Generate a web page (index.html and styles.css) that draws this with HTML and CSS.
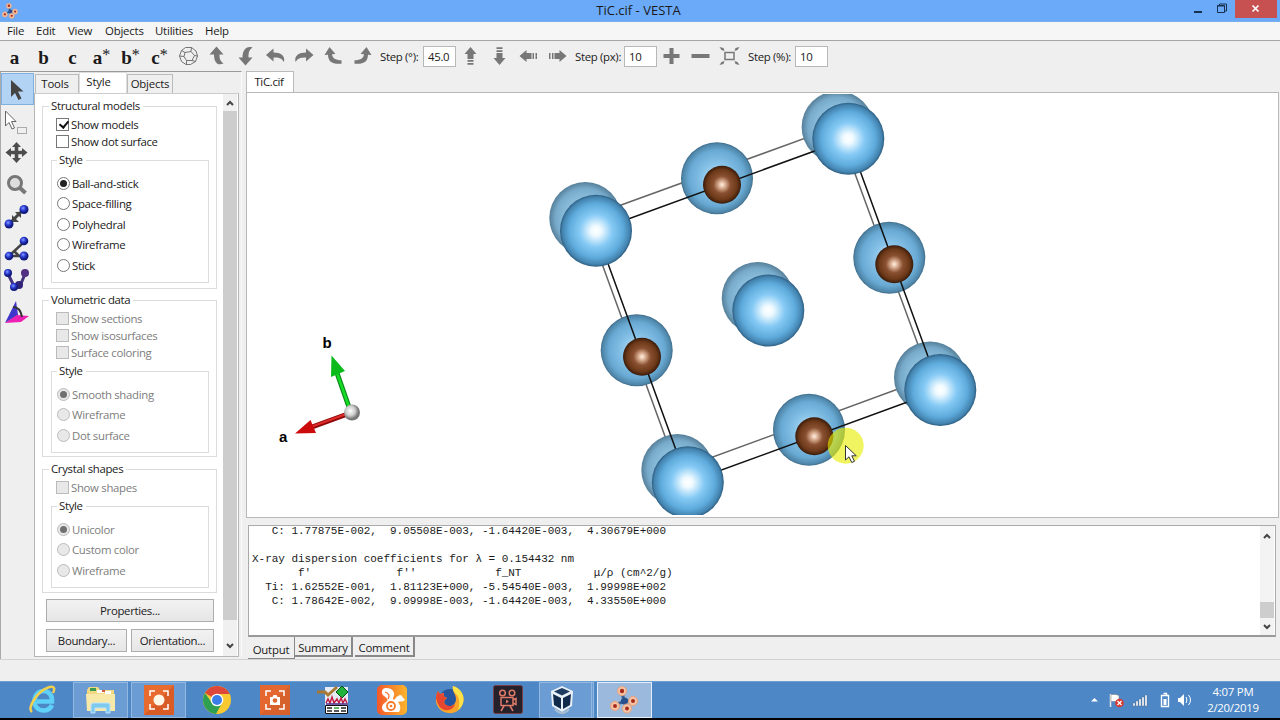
FILE: index.html
```
<!DOCTYPE html>
<html lang="en">
<head>
  <meta charset="UTF-8">
  <title>TiC.cif - VESTA</title>
  <link rel="stylesheet" href="styles.css">
</head>
<body>
  <svg width="0" height="0" class="defs">
    <defs>
      <radialGradient id="ti"><stop offset="0" stop-color="#fff"/><stop offset=".14" stop-color="#effaff"/><stop offset=".45" stop-color="#86caf5"/><stop offset=".75" stop-color="#5eabdc"/><stop offset=".93" stop-color="#4484b0"/><stop offset="1" stop-color="#2d5d80"/></radialGradient>
      <radialGradient id="tiMid"><stop offset="0" stop-color="#d8efff"/><stop offset=".4" stop-color="#88c3e9"/><stop offset=".78" stop-color="#68a9d3"/><stop offset=".95" stop-color="#4f86a9"/><stop offset="1" stop-color="#3e6b88"/></radialGradient>
      <radialGradient id="tiBack"><stop offset="0" stop-color="#c5e2f3"/><stop offset=".5" stop-color="#8fc0de"/><stop offset=".82" stop-color="#78abcb"/><stop offset="1" stop-color="#567f99"/></radialGradient>
      <radialGradient id="carbon"><stop offset="0" stop-color="#fff0e4"/><stop offset=".18" stop-color="#dcb196"/><stop offset=".45" stop-color="#8a5132"/><stop offset=".8" stop-color="#6b3818"/><stop offset="1" stop-color="#391b0a"/></radialGradient>
      <radialGradient id="blueBall" cx=".4" cy=".35"><stop offset="0" stop-color="#8c9cff"/><stop offset=".5" stop-color="#2f42d8"/><stop offset="1" stop-color="#101a80"/></radialGradient>
      <radialGradient id="origin" cx=".4" cy=".4"><stop offset="0" stop-color="#fff"/><stop offset=".6" stop-color="#ccc"/><stop offset="1" stop-color="#777"/></radialGradient>
      <linearGradient id="ucg"><stop offset="0" stop-color="#f4582a"/><stop offset="1" stop-color="#fbb52c"/></linearGradient>
      <symbol id="vesta" viewBox="0 0 28 28">
        <path d="M12 6l2 9-8 4M14 15l10-1M14 15l3 7" stroke="#3a5f92" stroke-width="3" fill="none"/>
        <circle cx="14.500" cy="15" r="3.500" fill="#27508c"/>
        <g fill="#f6c4a4" stroke="#e9a27c"><circle cx="12" cy="5" r="4.500"/><circle cx="5" cy="20" r="4.500"/><circle cx="23" cy="15" r="4.500"/><circle cx="17" cy="22.500" r="4.500"/></g>
        <g fill="#a52d1e"><circle cx="12" cy="5" r="2.200"/><circle cx="5" cy="20" r="2"/><circle cx="23" cy="15" r="2"/><circle cx="17" cy="22.500" r="2"/></g>
      </symbol>
    </defs>
  </svg>

  <header class="titlebar">
    <svg class="app-icon" width="16" height="16"><use href="#vesta"/></svg>
    <div class="title">TiC.cif - VESTA</div>
    <div class="win-buttons">
      <svg width="25" height="21"><path d="M9 12h8" stroke="#17304f" stroke-width="2"/></svg>
      <svg width="25" height="21"><path d="M7.500 5.500h7v7h-7zM9.500 5V4h7v7h-2" stroke="#17304f" fill="none"/><path d="M7 6h8" stroke="#17304f"/></svg>
      <div class="close"><svg width="10" height="10"><path d="M1.500 1.500l6 6M7.500 1.500l-6 6" stroke="#fff" stroke-width="1.700"/></svg></div>
    </div>
  </header>

  <nav class="menubar">
    <span class="m-file">File</span><span class="m-edit">Edit</span><span class="m-view">View</span><span class="m-objects">Objects</span><span class="m-util">Utilities</span><span>Help</span>
  </nav>

  <div class="toolbar">
    <b>a</b><b>b</b><b>c</b><b>a<sup>*</sup></b><b>b<sup>*</sup></b><b>c<sup>*</sup></b>
    <svg class="tool" viewBox="0 0 20 20"><path d="M7 1.500h6l4.500 3.500 1.500 5-2 5.500-5 3H7.500L3 15.500 1 10l2-5.500zM6.500 6.500l6-1 3.500 4-2.500 5H8l-2.500-4zM6.500 6.500L3 4.500M12.500 5.500L13 1.500M16 9.500l3 .5M13.500 14.500l3.500 1M8 14.500v4M5.500 10.500L1 10" fill="none" stroke="#666" stroke-width=".9"/></svg>
    <svg class="tool" viewBox="0 0 20 20"><path d="M9 .5L16 8.500h-4c0 4 .5 6.500 4 9-6 2.500-9.500-1-9.500-9H2z"/></svg>
    <svg class="tool" viewBox="0 0 20 20"><path d="M9 19.500L2 11.500h4C6 4.500 9.500-.5 16 1.500 12.500 4 12 6.500 12 11.500h4z"/></svg>
    <svg class="tool" viewBox="0 0 20 20"><path d="M.5 9L8 2.500v4c7 0 12 3 10.500 9.500C16 12 13 11.500 8 11.500v4z"/></svg>
    <svg class="tool" viewBox="0 0 20 20"><path d="M19 9l-7.500-6.500v4c-7 0-12 3-10.500 9.500C3.500 12 6.500 11.500 11.500 11.500v4z"/></svg>
    <svg class="tool" viewBox="0 0 20 20"><path d="M6 1l6 7-3.500.2c.5 3.800 3 6 9.500 6v3.500C9 18.500 4.700 16 4.500 8.800L1 9z"/></svg>
    <svg class="tool" viewBox="0 0 20 20"><path d="M14 1L8 8l3.500.2c-.5 3.800-3 6-9.500 6v3.500C11 18.500 15.300 16 15.500 8.800L19 9z"/></svg>
    <label class="step-deg">Step (°):</label><input value="45.0">
    <svg class="tool" viewBox="0 0 20 20"><path d="M10 1l6 7h-3v5H7V8H4zM7 14h6v1.700H7zM7 17h6v1.700H7z"/></svg>
    <svg class="tool" viewBox="0 0 20 20"><path d="M10 19l6-7h-3V7H7v5H4zM7 4.300h6V6H7zM7 1.300h6V3H7z"/></svg>
    <svg class="tool" viewBox="0 0 20 20"><path d="M1 10l7-6v3h5v6H8v3zM14 7h1.500v6H14zM17 7h1.500v6H17z"/></svg>
    <svg class="tool" viewBox="0 0 20 20"><path d="M19 10l-7-6v3H7v6h5v3zM4.500 7H6v6H4.500zM1.500 7H3v6H1.500z"/></svg>
    <label class="step-px">Step (px):</label><input value="10">
    <svg class="tool" viewBox="0 0 20 20"><path d="M8 2h4v6h6v4h-6v6H8v-6H2V8h6z"/></svg>
    <svg class="tool" viewBox="0 0 20 20"><path d="M1 8h18v4H1z"/></svg>
    <svg class="tool" viewBox="0 0 20 20"><path d="M5.500 6.500h9v7h-9z" fill="none" stroke="#777" stroke-width="1.500"/><path d="M0 1l4 1 1 3-3-1zM20 1l-4 1-1 3 3-1zM0 19l4-1 1-3-3 1zM20 19l-4-1-1-3 3 1z"/></svg>
    <label class="step-pct">Step (%):</label><input value="10">
  </div>

  <main>
    <aside class="toolstrip">
      <div class="active"><svg width="32" height="32"><path d="M11 8v17l4-4 3.500 7 3-1.500L18 19.500h5.500z" fill="#444"/></svg></div>
      <div><svg width="32" height="32"><path d="M4.500 6v15l3.500-3.500 3 6.500 2.500-1-3-6.500h4.500z" fill="#fff" stroke="#666"/><path d="M16.500 22.500h9v6h-9z" fill="none" stroke="#666" stroke-dasharray="1 1"/></svg></div>
      <div><svg width="32" height="32"><path d="M15.500 5l4.500 5h-2.700v3.700h3.700v-2.700l5.500 4.500-5.500 4.500v-2.700h-3.700V21H20l-4.500 5-4.500-5h2.700v-3.700H10V20l-5.500-4.500L10 11v2.700h3.700V10H11z" fill="#4d4d4d"/></svg></div>
      <div><svg width="32" height="32"><circle cx="14" cy="14" r="6.500" fill="#ddd" stroke="#777" stroke-width="3"/><path d="M19 19l5.500 5" stroke="#777" stroke-width="4"/></svg></div>
      <div><svg width="32" height="32"><path d="M8 23L23 8" stroke="#444" stroke-width="3"/><path d="M11 14v7h7zM14 11h6v6z" fill="#444"/><circle cx="23" cy="8.500" r="4.500" fill="url(#blueBall)"/><circle cx="8" cy="23" r="4.500" fill="url(#blueBall)"/></svg></div>
      <div><svg width="32" height="32"><path d="M23 9L8 23h15M13 18l5 5" fill="none" stroke="#444" stroke-width="2.500"/><circle cx="23" cy="8" r="4.300" fill="url(#blueBall)"/><circle cx="8" cy="23" r="4.300" fill="url(#blueBall)"/><circle cx="23" cy="23" r="4.500" fill="url(#blueBall)"/></svg></div>
      <div><svg width="32" height="32"><path d="M7 9l6 12h6l5-12" fill="none" stroke="#44337c" stroke-width="3"/><circle cx="7" cy="8" r="4" fill="url(#blueBall)"/><circle cx="24" cy="8" r="4" fill="#523082"/><circle cx="18" cy="20" r="4" fill="#302377"/><circle cx="13" cy="22" r="4" fill="url(#blueBall)"/></svg></div>
      <div><svg width="32" height="32"><path d="M4 26L15 4l2 14z" fill="#4036cc"/><path d="M4 26l12-8 12 1-8 6z" fill="#ee20b4"/><path d="M12 10c6 0 8 4 9 10" fill="none" stroke="#333" stroke-width="2"/></svg></div>
    </aside>

    <section class="side">
      <div class="side-tabs"><span class="t-tools">Tools</span><span class="t-style on">Style</span><span class="t-objects">Objects</span></div>
      <div class="side-page">
        <div class="options">
          <fieldset class="group structural">
            <legend>Structural models</legend>
            <label class="check"><i class="on"></i>Show models</label>
            <label class="check"><i></i>Show dot surface</label>
            <fieldset class="inner">
              <legend>Style</legend>
              <label class="radio"><i class="on"></i>Ball-and-stick</label>
              <label class="radio"><i></i>Space-filling</label>
              <label class="radio"><i></i>Polyhedral</label>
              <label class="radio"><i></i>Wireframe</label>
              <label class="radio"><i></i>Stick</label>
            </fieldset>
          </fieldset>
          <fieldset class="group volumetric">
            <legend>Volumetric data</legend>
            <label class="check off"><i></i>Show sections</label>
            <label class="check off"><i></i>Show isosurfaces</label>
            <label class="check off"><i></i>Surface coloring</label>
            <fieldset class="inner">
              <legend>Style</legend>
              <label class="radio off"><i class="on"></i>Smooth shading</label>
              <label class="radio off"><i></i>Wireframe</label>
              <label class="radio off"><i></i>Dot surface</label>
            </fieldset>
          </fieldset>
          <fieldset class="group crystal">
            <legend>Crystal shapes</legend>
            <label class="check off"><i></i>Show shapes</label>
            <fieldset class="inner">
              <legend>Style</legend>
              <label class="radio off"><i class="on"></i>Unicolor</label>
              <label class="radio off"><i></i>Custom color</label>
              <label class="radio off"><i></i>Wireframe</label>
            </fieldset>
          </fieldset>
          <div class="side-buttons">
            <button class="wide">Properties...</button>
            <button>Boundary...</button>
            <button>Orientation...</button>
          </div>
        </div>
        <div class="scrollbar">
          <svg width="14" height="14"><path d="M4 9l3-3 3 3" fill="none" stroke="#444" stroke-width="2"/></svg>
          <div class="thumb"></div>
          <svg width="14" height="14"><path d="M4 5l3 3 3-3" fill="none" stroke="#444" stroke-width="2"/></svg>
        </div>
      </div>
    </section>

    <section class="work">
      <div class="doc-tabs"><span>TiC.cif</span></div>
      <div class="canvas">
        <svg class="scene" width="1030" height="424" viewBox="247 93 1030 424">
          <clipPath id="view"><rect x="247" y="94" width="1031" height="421"/></clipPath>
          <g clip-path="url(#view)">
            <path d="M585.300 218L837.600 126.400 930 377.300 677.300 470z" fill="none" stroke="#666" stroke-width="1.500"/>
            <g fill="url(#tiBack)"><circle cx="585.300" cy="218" r="36"/><circle cx="837.600" cy="127" r="36"/><circle cx="757.700" cy="298" r="36"/><circle cx="930" cy="377.500" r="36"/><circle cx="677.300" cy="470" r="36"/></g>
            <g fill="url(#tiMid)"><circle cx="717" cy="178.300" r="36"/><circle cx="889.300" cy="257.800" r="36"/><circle cx="636.700" cy="350.300" r="36"/><circle cx="809" cy="429.800" r="36"/></g>
            <path d="M596 230.700L848.300 138.700 940.300 390 687.800 482.300z" fill="none" stroke="#111" stroke-width="1.500"/>
            <g fill="url(#carbon)"><circle cx="722" cy="184.700" r="19"/><circle cx="894.300" cy="264.200" r="19"/><circle cx="642" cy="356.700" r="19"/><circle cx="814.300" cy="436.300" r="19"/></g>
            <g fill="url(#ti)"><circle cx="596" cy="230.700" r="36"/><circle cx="848.300" cy="138.700" r="36"/><circle cx="768.300" cy="310.500" r="36"/><circle cx="940.300" cy="390" r="36"/><circle cx="687.800" cy="482.300" r="36"/></g>
          </g>
          <path d="M350 410L337 373" stroke="#0a8d18" stroke-width="5"/><path d="M350 410L337 373" stroke="#16dc26" stroke-width="2.500"/>
          <path d="M331.500 355.500l13.500 15.500-14 6z" fill="#0cba1c"/>
          <path d="M349 413.500L312 427" stroke="#8e0909" stroke-width="5"/><path d="M349 413L312 426.500" stroke="#e02b2b" stroke-width="2"/>
          <path d="M295 433.500l15.500-13.500 5.500 13z" fill="#cc0c0c"/>
          <circle cx="352" cy="412.500" r="8" fill="url(#origin)"/>
          <text x="322.500" y="348">b</text>
          <text x="279" y="442">a</text>
          <circle cx="845.700" cy="445.700" r="18" fill="#e8ee00" opacity=".62"/>
          <path d="M845.500 445.500v14.500l3.500-3.200 2.800 5.700 2.700-1.200-2.700-5.500h4.500z" fill="#fff" stroke="#333"/>
        </svg>
      </div>
      <div class="output">
<pre>   C: 1.77875E-002,  9.05508E-003, -1.64420E-003,  4.30679E+000

X-ray dispersion coefficients for λ = 0.154432 nm
       f'             f''            f_NT           μ/ρ (cm^2/g)
  Ti: 1.62552E-001,  1.81123E+000, -5.54540E-003,  1.99998E+002
   C: 1.78642E-002,  9.09998E-003, -1.64420E-003,  4.33550E+000</pre>
        <div class="scrollbar">
          <svg width="14" height="14"><path d="M4 9l3-3 3 3" fill="none" stroke="#444" stroke-width="2"/></svg>
          <div class="thumb"></div>
          <svg width="14" height="14"><path d="M4 5l3 3 3-3" fill="none" stroke="#444" stroke-width="2"/></svg>
        </div>
      </div>
      <div class="out-tabs"><span class="o-output on">Output</span><span class="o-summary">Summary</span><span class="o-comment">Comment</span></div>
    </section>
  </main>

  <div class="statusbar"></div>

  <footer class="taskbar">
    <div class="apps">
      <!-- Internet Explorer -->
      <div class="app"><svg width="30" height="30"><path d="M24 20c-1.500 3.500-4.500 5.500-8.500 5.500-5.500 0-9-4-9-9.500S10 6 15.500 6s9 4.500 8.500 10.500H9" fill="none" stroke="#5fd0f7" stroke-width="4.500"/><path d="M4 27C-1 23 9 7 19 3c6-2.500 9-1 6 5" fill="none" stroke="#f1d04e" stroke-width="2.500"/></svg></div>
      <!-- Explorer -->
      <div class="app open"><svg width="32" height="30"><path d="M2 5l2-3h9l2 3h14v21H2z" fill="#f2d981"/><path d="M5 3h6v3H5z" fill="#3d9b52"/><path d="M12 5h7v3h-7zM20 6h6v3h-6z" fill="#fff"/><path d="M17 5h3v2h-3z" fill="#d55c3e"/><path d="M1 9h29v17H2z" fill="#f8e9a9"/><path d="M6 28V20q0-2 2-2h15q2 0 2 2v8h-4v-5H10v5z" fill="#7fc9ee" stroke="#bce5f8"/></svg></div>
      <!-- recorder -->
      <div class="app open"><svg width="30" height="30"><path d="M0 0h30v30H0z" fill="#e76b2f"/><path d="M0 30L30 0v30z" fill="#d95c27"/><path d="M6 11V6h5M19 6h5v5M24 19v5h-5M11 24H6v-5" fill="none" stroke="#fff" stroke-width="1.500"/><circle cx="15" cy="15" r="5.500" fill="#fff8e9"/></svg></div>
      <!-- Chrome -->
      <div class="app"><svg width="30" height="30"><circle cx="15" cy="15" r="14" fill="#f8c930"/><path d="M15 15L2.900 8A14 14 0 0 1 27.700 9H15z" fill="#dc473a"/><path d="M2.900 8A14 14 0 0 0 14 29l6-11-10 0z" fill="#2fa052"/><circle cx="15" cy="15" r="6.300" fill="#fff"/><circle cx="15" cy="15" r="5" fill="#3c7ee8"/></svg></div>
      <!-- screenshot tool -->
      <div class="app"><svg width="30" height="30"><path d="M0 0h30v30H0z" fill="#e3672e"/><path d="M0 30L30 0v30z" fill="#d6612c"/><path d="M6 11V6h5M19 6h5v5M24 19v5h-5M11 24H6v-5" fill="none" stroke="#fff" stroke-width="1.500"/><path d="M10 12h2.500l1-2h3l1 2H20v8H10z" fill="#fff"/><circle cx="15" cy="15.500" r="2.300" fill="#df672f"/></svg></div>
      <!-- diffraction viewer -->
      <div class="app"><svg width="32" height="30"><path d="M8 2h23v27H8z" fill="#e6eaf2"/><path d="M0 7h8l3 3 9-8" fill="none" stroke="#a97833" stroke-width="3"/><path d="M25 1l6 6-6 6-6-6z" fill="#21b33b" stroke="#064f13"/><path d="M9 18l2-4 2 4 2-6 2 6 3-4 2 4 2-5 2 5 2-4 2 4" fill="none" stroke="#c31e45" stroke-width="1.500"/><path d="M9 19h22" stroke="#4b2c8b" stroke-width="1.500"/><path d="M8.500 20.500h22v8h-22z" fill="#fff" stroke="#111"/><path d="M10 23h5M10 26h5M17 26h5M24 23h5M24 26h5" stroke="#222" stroke-width="1.500"/><path d="M17 23h5" stroke="#2ba136" stroke-width="1.500"/></svg></div>
      <!-- UC browser -->
      <div class="app"><svg width="30" height="30"><rect width="30" height="30" rx="5" fill="url(#ucg)"/><path d="M8 27c-5-3-3-8 1-10 3-2 1-4-2-6-4-3-2-8 2-8 7 0 10 5 7 10 0 2 1 2 2 1 2-3 4-4 6-4l4 5c-2 2-5 1-7 2 3 4 3 7 1 10z" fill="#fff"/><circle cx="14" cy="21" r="4" fill="none" stroke="#f37a2a" stroke-width="1.800"/><circle cx="14" cy="21" r="1.300" fill="#f37a2a"/><path d="M8 7c4 1 5 4 3 7" fill="none" stroke="#f4692a" stroke-width="1.200"/></svg></div>
      <!-- Firefox -->
      <div class="app"><svg width="30" height="30"><circle cx="15" cy="15" r="11" fill="#27569f"/><path d="M18 1c9 3 12 11 10 17-2 7-8 11-15 10C5 27 0 20 1 13c0-3 1-5 2-7l2 3 4-1c-1 3 0 4 3 5-3 2-4 5-1 7 4 3 10 0 10-6 0-5-4-7-3-13z" fill="#fba52a"/><path d="M1 13c0-3 1-5 2-7l2 3 4-1c-1 3 0 4 3 5-3 2-4 5-1 7 3 2 7 1 9-1-1 5-7 8-13 5-3-2-5-6-6-11z" fill="#e8472f"/><path d="M18 1c9 3 12 11 10 17-1 3-3 6-5 7 2-6 2-12-2-16-2-2-4-5-3-8z" fill="#fde347"/></svg></div>
      <!-- movie maker -->
      <div class="app"><svg width="30" height="30"><rect x=".5" y=".5" width="29" height="28" rx="2" fill="#252029" stroke="#793f44"/><g fill="none" stroke="#dd7a68" stroke-width="1.500"><circle cx="9.500" cy="8" r="2.800"/><circle cx="19" cy="8" r="2.800"/><path d="M8 12.500h12v8H8zM20 15l3-1.500v6L20 18M11 21l-3 5M17 21l3 5"/></g><path d="M13 14.500v4l3-2z" fill="#dd7a68"/></svg></div>
      <!-- VirtualBox -->
      <div class="app open stacked"><svg width="28" height="30"><path d="M14 1l11 5-1 15-10 6-10-6L3 6z" fill="#e9f1f8"/><path d="M14 3l8 3.500-8 4-8-4z" fill="#1d3b60"/><path d="M5 9l8 4v11l-7-4zM23 9l-8 4v11l7-4z" fill="#112b4c"/><path d="M7 24q7 8 14 0" fill="none" stroke="#a8bdd2" stroke-width="2"/></svg></div>
      <!-- VESTA -->
      <div class="app current"><svg width="28" height="28"><use href="#vesta"/></svg></div>
    </div>
    <div class="tray">
      <svg width="100" height="18">
        <path d="M0 10.500L3.500 7 7 10.500z" fill="#fff"/>
        <path d="M19.500 3v13" stroke="#e8e8e8" stroke-width="1.500"/><path d="M20 3.500h5l3 1v6h-8z" fill="#fff" stroke="#777" stroke-width=".5"/><circle cx="28.500" cy="12" r="4.300" fill="#d83a34"/><path d="M26.500 10l4 4M30.500 10l-4 4" stroke="#fff" stroke-width="1.300"/>
        <path d="M42 12h2v3h-2zM45 10h2v5h-2zM48 8h2v7h-2zM51 6h2v9h-2zM54 4h2v11h-2z" fill="#fff" stroke="#4a6485" stroke-width=".4"/>
        <path d="M70.500 4.500h7v11h-7zM72.500 2.500h3v2" fill="none" stroke="#fff" stroke-width="1.400"/><path d="M72.500 8h3v6h-3z" fill="#fff"/>
        <path d="M87 7h2l4-4v12l-4-4h-2z" fill="#fff"/><path d="M95 6q2 3 0 6M97.500 4q4 5 0 10" fill="none" stroke="#fff"/>
      </svg>
      <div class="clock"><span>4:07 PM</span><span>2/20/2019</span></div>
    </div>
  </footer>
</body>
</html>
```
FILE: styles.css
```
* {
  box-sizing: border-box;
}

body {
  margin: 0;
  width: 1280px;
  height: 720px;
  overflow: hidden;
  display: flex;
  flex-direction: column;
  background: #efefef;
  color: #1a1a1a;
  font-family: "Open Sans", "Noto Sans", sans-serif;
  font-size: 11.4px;
  letter-spacing: -0.32px;
  white-space: nowrap;
}

svg {
  display: block;
  flex: none;
}

.defs {
  position: absolute;
}

/* title bar */
.titlebar {
  height: 22px;
  flex: none;
  display: flex;
  background: #6aaaf8;
  border-bottom: 1px solid #79aeea;
}

.app-icon {
  margin: 3px 0 0 2px;
}

.title {
  flex: 1;
  padding-left: 74px;
  text-align: center;
  font-size: 13px;
  line-height: 21px;
  letter-spacing: 0;
}

.win-buttons {
  display: flex;
  width: 95px;
}

.close {
  width: 42px;
  height: 18px;
  display: flex;
  align-items: center;
  justify-content: center;
  background: #c75050;
}

/* menu */
.menubar {
  height: 19px;
  flex: none;
  display: flex;
  padding-left: 7px;
  line-height: 18px;
  letter-spacing: -0.2px;
  background: #f5f6f5;
  border-bottom: 1px solid #a5a5a5;
}

.m-file { width: 29px; }
.m-edit { width: 32px; }
.m-view { width: 37px; }
.m-objects { width: 50px; }
.m-util { width: 50px; }

/* toolbar */
.toolbar {
  height: 30px;
  flex: none;
  display: flex;
  align-items: center;
}

.toolbar b {
  width: 29px;
  text-align: center;
  font-family: "Liberation Serif", serif;
  font-size: 19px;
  letter-spacing: 0;
  line-height: 22px;
  padding-top: 3px;
}

.toolbar sup {
  font-size: 16px;
  font-weight: normal;
  line-height: 0;
  vertical-align: 4px;
}

.tool {
  width: 29px;
  height: 20px;
  fill: #777;
}

.toolbar input {
  width: 33px;
  height: 21px;
  padding: 0 4px;
  border: 1px solid #b8b8b8;
  background: #fff;
  color: #1a1a1a;
  font: inherit;
  letter-spacing: inherit;
}

.step-deg { width: 46px; padding-left: 3px; }
.step-px { width: 52px; padding-left: 3px; }
.step-pct { width: 51px; padding-left: 4px; }

main {
  height: 589px;
  flex: none;
  display: flex;
  border-bottom: 1px solid #d2d2d2;
}

.toolstrip {
  width: 34px;
  border-top: 1px solid #999;
  border-left: 1px solid #aaa;
  padding-top: 1px;
}

.toolstrip div {
  width: 33px;
  height: 32px;
}

.toolstrip .active {
  background: #b3d3f5;
  border: 1px solid #7fb0df;
}

.toolstrip .active svg {
  margin: -2px 0 0 -2px;
}

/* side panel */
.side {
  width: 208px;
  height: 586px;
  padding-right: 2px;
  border-top: 1px solid #999;
  border-right: 1px solid #fafafa;
  display: flex;
  flex-direction: column;
}

.side-tabs {
  height: 21px;
  flex: none;
  display: flex;
  align-items: flex-end;
  padding-left: 1px;
}

.side-tabs span {
  height: 19px;
  text-align: center;
  line-height: 18px;
  letter-spacing: -0.2px;
  border: 1px solid #bbb;
  border-bottom: 0;
}

.side-tabs .on {
  height: 21px;
  background: #fff;
  border-color: #ddd;
}

.t-tools { width: 44px; padding-right: 4px; }
.t-style { width: 48px; padding-right: 9px; }
.t-objects { width: 46px; }

.side-page {
  height: 564px;
  display: flex;
  background: #fff;
  border: 1px solid #b5b5b5;
  border-top-color: #ccc;
}

.options {
  width: 188px;
  padding: 5px 0 0 7px;
}

fieldset {
  margin: 0;
  min-width: 0;
  border: 1px solid #dcdcdc;
}

legend {
  height: 14px;
  padding: 0 3px 0 2px;
  line-height: 14px;
}

.group {
  width: 175px;
  padding: 3px 8px 0 6px;
}

.structural { height: 190px; }
.volumetric { height: 164px; margin-top: 4px; }
.crystal { height: 131px; margin-top: 5px; }

.inner {
  width: 158px;
  margin: 3px 0 0 2px;
  padding: 6px 0 0 5px;
  height: 89px;
}

.structural .inner {
  height: 130px;
}

.check,
.radio {
  display: flex;
  align-items: center;
  height: 17px;
}

.check {
  padding-left: 7px;
}

.radio {
  height: 20.5px;
}

.check i,
.radio i {
  width: 13px;
  height: 13px;
  margin-right: 2px;
  border: 1px solid #777;
  background: #fff;
  flex: none;
}

.radio i {
  border-radius: 50%;
}

.check i.on::after {
  content: "";
  display: block;
  width: 4px;
  height: 7px;
  margin: 0 0 0 3.5px;
  border: solid #111;
  border-width: 0 2px 2px 0;
  transform: rotate(40deg);
}

.radio i.on::after {
  content: "";
  display: block;
  width: 7px;
  height: 7px;
  margin: 2px;
  border-radius: 50%;
  background: #222;
}

.off {
  color: #7d7d7d;
}

.off i {
  border-color: #bbb;
  background: #e8e8e8;
}

.radio.off i.on::after {
  background: #707070;
}

.side-buttons {
  display: grid;
  grid-template-columns: 81px 83px;
  gap: 7px 4px;
  padding: 6px 0 0 4px;
}

button {
  height: 23px;
  padding: 0;
  border: 1px solid #adadad;
  background: linear-gradient(#f2f2f2, #e6e6e6);
  color: #1a1a1a;
  font: inherit;
  letter-spacing: inherit;
}

.wide {
  grid-column: span 2;
}

.scrollbar {
  width: 14px;
  display: flex;
  flex-direction: column;
  justify-content: space-between;
  background: #f0f0f0;
}

.side-page .scrollbar {
  padding: 2px 0 3px;
}

.side-page .thumb {
  height: 511px;
  margin: 1px 0 19px;
  background: #cdcdcd;
}

/* document area */
.work {
  width: 1033px;
  margin-left: 4px;
  display: flex;
  flex-direction: column;
}

.doc-tabs {
  height: 21px;
  flex: none;
}

.doc-tabs span {
  display: block;
  width: 48px;
  height: 22px;
  padding-right: 2px;
  text-align: center;
  line-height: 20px;
  background: #fff;
  border: 1px solid #bbb;
  border-bottom: 0;
}

.canvas {
  height: 426px;
  flex: none;
  background: #fff;
  border: 1px solid #b8b8b8;
}

.scene text {
  font-family: "Liberation Sans", sans-serif;
  font-size: 15px;
  font-weight: bold;
  letter-spacing: 0;
  fill: #000;
}

.output {
  height: 112px;
  flex: none;
  width: 1028px;
  margin: 7px 0 0 2px;
  display: flex;
  justify-content: space-between;
  overflow: hidden;
  background: #fff;
  border: 1px solid #aaa;
  border-bottom: 2px solid #999;
}

pre {
  margin: 1px 0 0 3px;
  height: 108px;
  overflow: hidden;
  line-height: 14px;
  font-family: "Liberation Mono", monospace;
  font-size: 11px;
  letter-spacing: -0.03px;
}

/* the log is scrolled part way into its first line */
pre::before {
  content: "";
  display: block;
  margin-top: -3.5px;
}

.output .scrollbar {
  background: #f3f3f3;
  margin-right: 1px;
  padding: 3px 0 1px;
}

.output .thumb {
  height: 16px;
  margin-top: 57px;
  background: #cdcdcd;
}

.out-tabs {
  display: flex;
  height: 22px;
  padding-left: 2px;
  letter-spacing: -0.2px;
}

.out-tabs span {
  height: 20px;
  text-align: center;
  line-height: 21px;
  border: solid #888;
  border-width: 0 2px 2px 0;
}

.out-tabs .on {
  height: 22px;
  line-height: 25px;
  border-width: 0 1px 1px 0;
}

.o-output { width: 47px; }
.o-summary { width: 58px; margin-right: 2px; }
.o-comment { width: 60px; }

.statusbar {
  height: 21px;
  flex: none;
}

/* taskbar */
.taskbar {
  height: 39px;
  flex: none;
  display: flex;
  justify-content: space-between;
  background: #4d87c6;
  border-top: 1px solid #6c9fd4;
  border-bottom: 2px solid #000;
}

.apps {
  display: flex;
  gap: 3.2px;
  padding-left: 15px;
}

.app {
  width: 55px;
  height: 36px;
  display: flex;
  align-items: center;
  justify-content: center;
}

.open {
  background: #6b9cd3;
  border: 1px solid #94b9e0;
}

.stacked {
  padding-right: 6px;
  border-right: 3px double #94b9e0;
}

.current {
  background: #9bb9dc;
  border: 1px solid #e3eefa;
}

.tray {
  display: flex;
  align-items: center;
  gap: 16px;
  width: 189px;
  color: #fff;
}

.clock {
  width: 52px;
  text-align: center;
  line-height: 16px;
  letter-spacing: -0.25px;
}

.clock span {
  display: block;
}
```
